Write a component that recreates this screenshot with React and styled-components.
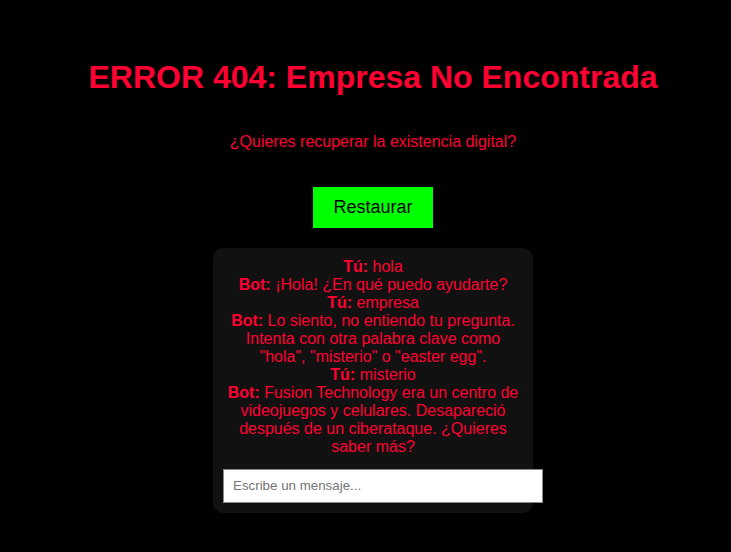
import React from "react";
import styled, { createGlobalStyle } from "styled-components";

const GlobalStyle = createGlobalStyle`
  html, body {
    margin: 0;
    background: #000;
    font-family: "Liberation Sans", Arial, sans-serif;
  }
`;

const Page = styled.div`
  min-height: 552px;
  padding: 38px 0 0 15px;
  box-sizing: border-box;
  text-align: center;
  color: #ff0033;
`;

const Title = styled.h1`
  font-size: 32px;
  font-weight: bold;
  margin: 21px 0 0;
`;

const Lead = styled.p`
  font-size: 16px;
  margin: 37px 0 0;
`;

const RestoreButton = styled.button`
  margin-top: 36px;
  padding: 10px 20px;
  font-family: inherit;
  font-size: 18px;
  color: #000;
  background: #00ff00;
  border: none;
  cursor: pointer;
`;

const Chat = styled.div`
  width: 300px;
  margin: 20px auto 0;
  padding: 10px;
  background: #111;
  border-radius: 10px;
`;

const Messages = styled.div`
  font-size: 16px;
  line-height: 18px;
`;

const Line = styled.div``;

const Who = styled.strong`
  font-weight: bold;
`;

const Input = styled.input`
  display: block;
  width: 100%;
  margin-top: 13px;
  padding: 8px 9px 9px;
  border: 1px solid #888;
  font-family: "Liberation Sans", Arial, sans-serif;
  font-size: 13.33px;
  color: #000;
  background: #fff;
  outline: none;
  &::placeholder {
    color: #757575;
  }
`;

const history = [
  { who: "Tú", text: "hola" },
  { who: "Bot", text: "¡Hola! ¿En qué puedo ayudarte?" },
  { who: "Tú", text: "empresa" },
  {
    who: "Bot",
    text: 'Lo siento, no entiendo tu pregunta. Intenta con otra palabra clave como "hola", "misterio" o "easter egg".',
  },
  { who: "Tú", text: "misterio" },
  {
    who: "Bot",
    text: "Fusion Technology era un centro de videojuegos y celulares. Desapareció después de un ciberataque. ¿Quieres saber más?",
  },
];

const App = () => {
  return (
    <>
      <GlobalStyle />
      <Page>
        <Title>ERROR 404: Empresa No Encontrada</Title>
        <Lead>¿Quieres recuperar la existencia digital?</Lead>
        <RestoreButton>Restaurar</RestoreButton>
        <Chat>
          <Messages>
            {history.map(({ who, text }, i) => (
              <Line key={i}>
                <Who>{who}:</Who> {text}
              </Line>
            ))}
          </Messages>
          <Input placeholder="Escribe un mensaje..." />
        </Chat>
      </Page>
    </>
  );
};

export default App;
